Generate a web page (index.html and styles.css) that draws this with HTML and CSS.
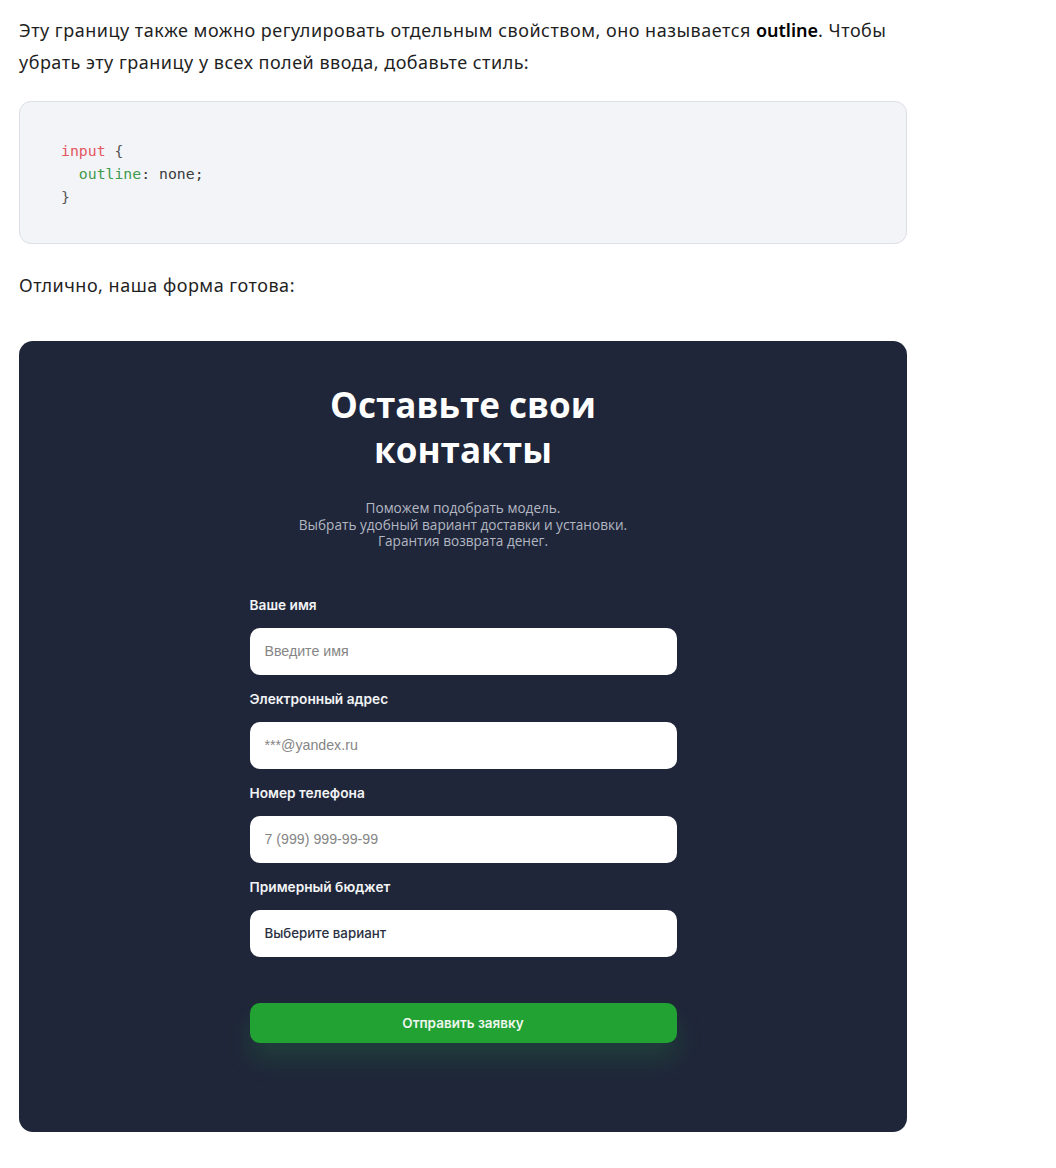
FILE: index.html
```html
<!DOCTYPE html>
<html lang="ru">
<head>
<meta charset="utf-8">
<title>outline</title>
<link rel="stylesheet" href="styles.css">
</head>
<body>
<main class="article">
  <p class="text">Эту границу также можно регулировать отдельным свойством, оно называется <b>outline</b>. Чтобы убрать эту границу у всех полей ввода, добавьте стиль:</p>
  <pre class="code"><code><span class="tok-sel">input</span> <span class="tok-br">{</span>
  <span class="tok-prop">outline</span>: none;
<span class="tok-br">}</span></code></pre>
  <p class="text text-after">Отлично, наша форма готова:</p>
  <section class="panel">
    <h2 class="panel-title">Оставьте свои<br>контакты</h2>
    <p class="panel-sub">Поможем подобрать модель.<br>Выбрать удобный вариант доставки и установки.<br>Гарантия возврата денег.</p>
    <form class="form">
      <div class="field">
        <span class="label">Ваше имя</span>
        <div class="input placeholder">Введите имя</div>
      </div>
      <div class="field">
        <span class="label">Электронный адрес</span>
        <div class="input placeholder">***@yandex.ru</div>
      </div>
      <div class="field">
        <span class="label">Номер телефона</span>
        <div class="input placeholder">7 (999) 999-99-99</div>
      </div>
      <div class="field">
        <span class="label">Примерный бюджет</span>
        <div class="input select">Выберите вариант</div>
      </div>
      <div class="button">Отправить заявку</div>
    </form>
  </section>
</main>
</body>
</html>
```
FILE: styles.css
```css
html, body {
  margin: 0;
  padding: 0;
  background: #ffffff;
}
body {
  font-family: "Noto Sans", "Open Sans", sans-serif;
  color: #1a1a1a;
}
.article {
  width: 888px;
  margin-left: 19px;
  padding-top: 14px;
}
.text {
  margin: 0;
  font-size: 18px;
  line-height: 32px;
  letter-spacing: 0.5px;
  color: #1f1f1f;
}
.text b {
  font-weight: 600;
  letter-spacing: 0;
  color: #000;
}
.code {
  margin: 23px 0 0;
  padding: 37px 41px 35px;
  background: #f3f4f7;
  border: 1px solid #dcdfe5;
  border-radius: 12px;
  font-family: "DejaVu Sans Mono", "Liberation Mono", monospace;
  font-size: 14.8px;
  line-height: 23px;
  color: #3b3b3b;
}
.tok-sel { color: #e4575f; }
.tok-prop { color: #3f9a4b; }
.tok-br { color: #555; }
.text-after {
  margin-top: 25px;
}
.panel {
  margin-top: 40px;
  background: #1f2639;
  border-radius: 14px;
  padding: 41px 0 89px;
  display: flex;
  flex-direction: column;
  align-items: center;
}
.panel-title {
  margin: 0;
  font-family: "Open Sans", sans-serif;
  font-weight: 700;
  font-size: 35px;
  line-height: 45px;
  color: #ffffff;
  text-align: center;
}
.panel-sub {
  margin: 28px 0 0;
  font-family: "Open Sans", sans-serif;
  font-size: 13.6px;
  line-height: 16.5px;
  color: #b3b7c2;
  text-align: center;
}
.form {
  margin-top: 47px;
  width: 427px;
  display: flex;
  flex-direction: column;
  gap: 16px;
}
.field {
  display: flex;
  flex-direction: column;
  gap: 15px;
}
.label {
  font-family: "Inter", sans-serif;
  font-weight: 600;
  font-size: 13.7px;
  line-height: 16px;
  color: #f2f3f5;
}
.input {
  height: 47px;
  box-sizing: border-box;
  background: #ffffff;
  border-radius: 10px;
  padding: 0 15px;
  display: flex;
  align-items: center;
  font-family: "Liberation Sans", Arial, sans-serif;
  font-size: 14.2px;
}
.placeholder { color: #858585; }
.select {
  font-family: "Inter", sans-serif;
  font-weight: 500;
  font-size: 13.3px;
  color: #2a3042;
}
.button {
  margin-top: 30px;
  height: 40px;
  border-radius: 10px;
  background: #23a234;
  box-shadow: 0 16px 26px rgba(40, 160, 70, 0.2);
  display: flex;
  align-items: center;
  justify-content: center;
  font-family: "Inter", sans-serif;
  font-weight: 600;
  font-size: 13.5px;
  color: #eef6ee;
}
```
